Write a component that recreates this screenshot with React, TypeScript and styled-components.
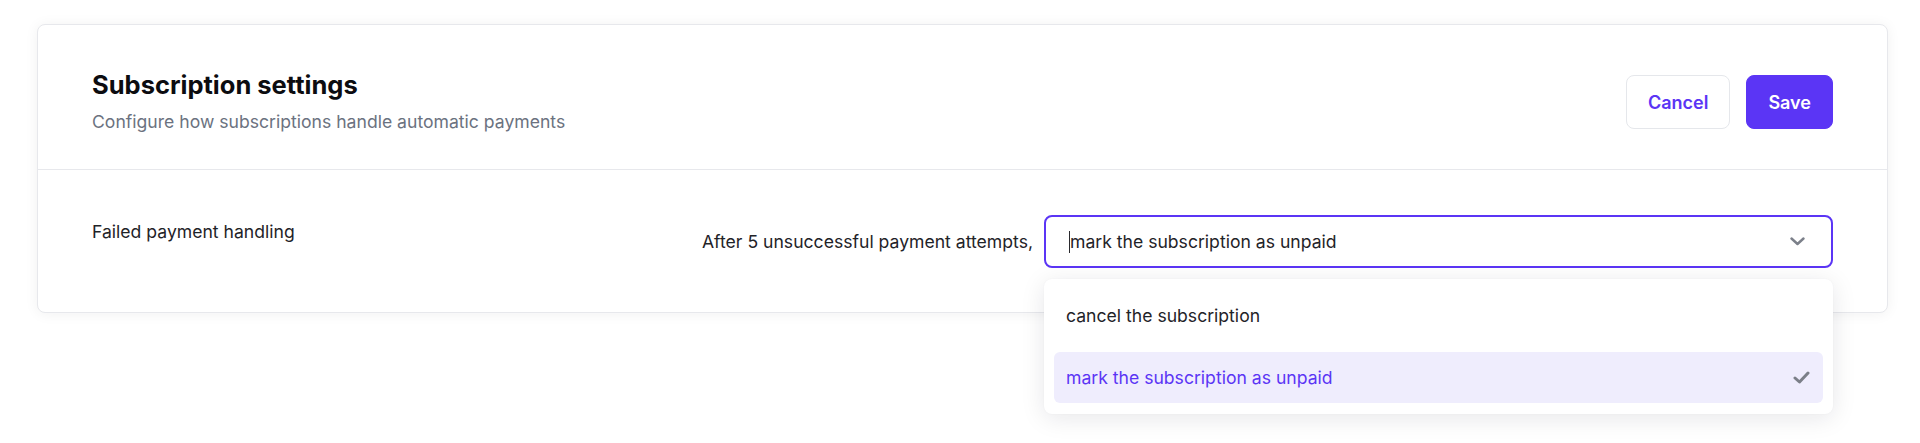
import styled, { createGlobalStyle } from "styled-components";

const GlobalStyle = createGlobalStyle`
  body {
    margin: 0;
    background: #ffffff;
    font-family: Inter, "Noto Sans", sans-serif;
    color: #1f2328;
  }
`;

const Page = styled.div`
  box-sizing: border-box;
  min-height: 100vh;
  padding: 24px 32px 0 37px;
`;

const Card = styled.section`
  background: #ffffff;
  border: 1px solid #e7e8ec;
  border-radius: 8px;
  box-shadow: 0 1px 14px rgba(15, 20, 40, 0.06);
`;

const Header = styled.header`
  display: flex;
  align-items: center;
  justify-content: space-between;
  padding: 44px 54px 34px;
  border-bottom: 1px solid #e7e8ec;
`;

const Title = styled.h1`
  margin: 0;
  font-size: 25.5px;
  line-height: 32px;
  font-weight: 700;
  color: #0c0c10;
`;

const Subtitle = styled.p`
  margin: 7px 0 0;
  font-size: 17.6px;
  line-height: 27px;
  color: #6b7280;
`;

const Actions = styled.div`
  display: flex;
  gap: 16px;
`;

const Button = styled.button<{ $primary?: boolean }>`
  height: 54px;
  padding: 0 21px;
  border-radius: 8px;
  font-family: inherit;
  font-size: 18px;
  font-weight: 600;
  border: 1px solid ${({ $primary }) => ($primary ? "#5b35f5" : "#e5e7eb")};
  background: ${({ $primary }) => ($primary ? "#5b35f5" : "#ffffff")};
  color: ${({ $primary }) => ($primary ? "#ffffff" : "#5b35f5")};
`;

const Body = styled.div`
  display: flex;
  align-items: flex-start;
  justify-content: space-between;
  padding: 45px 54px 44px;
`;

const Label = styled.div`
  padding-top: 3px;
  font-size: 17.6px;
  line-height: 27px;
  color: #1f2328;
`;

const Control = styled.div`
  display: flex;
  align-items: center;
  gap: 11px;
`;

const Prefix = styled.span`
  font-size: 17.6px;
  line-height: 27px;
  color: #1f2328;
`;

const SelectWrap = styled.div`
  position: relative;
  width: 789px;
`;

const SelectBox = styled.div`
  box-sizing: border-box;
  height: 53px;
  display: flex;
  align-items: center;
  justify-content: space-between;
  padding: 0 26px 0 24px;
  border: 2px solid #5b35f5;
  border-radius: 8px;
  font-size: 17.6px;
  line-height: 27px;
`;

const Value = styled.span`
  display: flex;
  align-items: center;
`;

const Caret = styled.span`
  display: inline-block;
  width: 1px;
  height: 22px;
  margin-left: -1px;
  background: #2a2a2e;
`;

const Menu = styled.ul`
  position: absolute;
  top: calc(100% + 11px);
  left: 0;
  right: 0;
  margin: 0;
  padding: 11px 10px;
  list-style: none;
  display: flex;
  flex-direction: column;
  gap: 11px;
  background: #ffffff;
  border-radius: 8px;
  box-shadow: 0 4px 24px rgba(15, 20, 40, 0.1), 0 0 2px rgba(15, 20, 40, 0.04);
`;

const Option = styled.li<{ $selected?: boolean }>`
  height: 51px;
  display: flex;
  align-items: center;
  justify-content: space-between;
  padding: 0 13px 0 12px;
  border-radius: 6px;
  font-size: 17.6px;
  background: ${({ $selected }) => ($selected ? "#efedfd" : "transparent")};
  color: ${({ $selected }) => ($selected ? "#5b35f5" : "#1f2328")};
`;

const Chevron = () => (
  <svg width="15" height="9" viewBox="0 0 15 9" fill="none">
    <polyline
      points="1.5,1.5 7.5,7 13.5,1.5"
      stroke="#7c808a"
      strokeWidth="2.4"
      strokeLinecap="round"
      strokeLinejoin="round"
    />
  </svg>
);

const Check = () => (
  <svg width="17" height="13" viewBox="0 0 17 13" fill="none">
    <polyline
      points="2,7 6.5,11 15,2"
      stroke="#7b7f88"
      strokeWidth="3"
      strokeLinecap="round"
      strokeLinejoin="round"
    />
  </svg>
);

const options = ["cancel the subscription", "mark the subscription as unpaid"];
const selected = options[1];

export default function App() {
  return (
    <>
      <GlobalStyle />
      <Page>
        <Card>
          <Header>
            <div>
              <Title>Subscription settings</Title>
              <Subtitle>
                Configure how subscriptions handle automatic payments
              </Subtitle>
            </div>
            <Actions>
              <Button>Cancel</Button>
              <Button $primary>Save</Button>
            </Actions>
          </Header>
          <Body>
            <Label>Failed payment handling</Label>
            <Control>
              <Prefix>After 5 unsuccessful payment attempts,</Prefix>
              <SelectWrap>
                <SelectBox>
                  <Value>
                    <Caret />
                    {selected}
                  </Value>
                  <Chevron />
                </SelectBox>
                <Menu>
                  {options.map((option) => (
                    <Option key={option} $selected={option === selected}>
                      {option}
                      {option === selected && <Check />}
                    </Option>
                  ))}
                </Menu>
              </SelectWrap>
            </Control>
          </Body>
        </Card>
      </Page>
    </>
  );
}
